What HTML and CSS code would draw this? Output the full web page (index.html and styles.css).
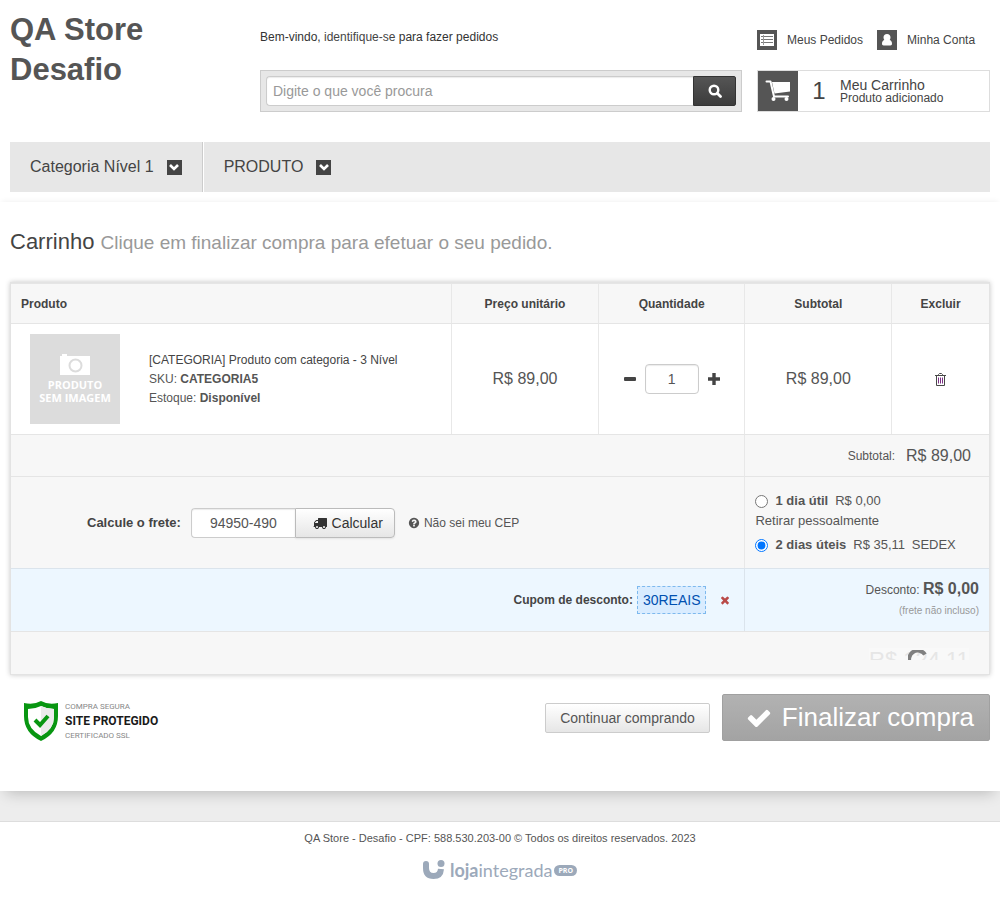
FILE: index.html
```html
<!DOCTYPE html>
<html lang="pt-BR">
<head>
<meta charset="utf-8">
<meta name="viewport" content="width=device-width, initial-scale=1">
<title>Carrinho - QA Store</title>
<link rel="stylesheet" href="styles.css">
</head>
<body>
<svg class="sprite" aria-hidden="true">
  <symbol id="chevron" viewBox="0 0 10 8"><path fill="none" stroke="currentColor" stroke-width="2.600" d="M1 2l4 4 4-4"/></symbol>
</svg>

<header class="header">
  <h1 class="logo"><a href="#">QA Store Desafio</a></h1>
  <div class="header-main">
    <p class="welcome">Bem-vindo, <a href="#">identifique-se</a> para fazer pedidos</p>
    <form class="search">
      <input class="search-input" type="text" placeholder="Digite o que você procura" aria-label="Buscar">
      <button class="search-button" type="button" aria-label="Buscar">
        <svg class="icon-14" viewBox="0 0 14 14"><circle cx="6" cy="6" r="4.300" fill="none" stroke="currentColor" stroke-width="2.400"/><path stroke="currentColor" stroke-width="2.800" stroke-linecap="round" d="M9.500 9.500l3 3"/></svg>
      </button>
    </form>
  </div>
  <div class="header-side">
    <div class="account">
      <a href="#" class="account-link">
        <span class="account-icon"><svg width="14" height="12" viewBox="0 0 14 12"><path d="M0 0h14v12H0z"/><path fill="#777" d="M1 2h12v1H1zM1 5h12v1H1zM1 8h12v1H1z"/><path fill="#999" d="M3 1h1v10H3z"/></svg></span>Meus Pedidos</a>
      <a href="#" class="account-link">
        <span class="account-icon"><svg width="12" height="12" viewBox="0 0 12 12"><path d="M6 0c2.200 0 3.500 1.500 3.500 3.500 0 1-.3 1.800-.8 2.500C10.400 6.500 11 8 11 9.800c0 1-.6 1.700-1.600 1.700H2.600C1.600 11.500 1 10.800 1 9.800 1 8 1.600 6.500 3.300 6c-.5-.7-.8-1.500-.8-2.500C2.500 1.500 3.800 0 6 0z"/></svg></span>Minha Conta</a>
    </div>
    <a href="#" class="cart">
      <span class="cart-icon"><svg width="26" height="22" viewBox="0 0 26 22"><path d="M7 2h18v9.500L9.500 13.500z"/><path fill="none" stroke="currentColor" stroke-width="2" stroke-linecap="round" stroke-linejoin="round" d="M1.500 1.500h4l3.500 15h14"/><circle cx="8.500" cy="19" r="2"/><circle cx="21.500" cy="19" r="2"/></svg></span>
      <span class="cart-count">1</span>
      <span class="cart-text"><span class="cart-title">Meu Carrinho</span><span class="cart-note">Produto adicionado</span></span>
    </a>
  </div>
</header>

<nav class="nav">
  <a href="#" class="nav-item">Categoria Nível 1<span class="nav-arrow"><svg width="10" height="8"><use href="#chevron"/></svg></span></a>
  <a href="#" class="nav-item">PRODUTO<span class="nav-arrow"><svg width="10" height="8"><use href="#chevron"/></svg></span></a>
</nav>

<main class="content">
  <h2 class="title">Carrinho <small>Clique em finalizar compra para efetuar o seu pedido.</small></h2>

  <table class="table">
    <thead>
      <tr>
        <th class="col-product" scope="col">Produto</th>
        <th class="col-value" scope="col">Preço unitário</th>
        <th class="col-value" scope="col">Quantidade</th>
        <th class="col-value" scope="col">Subtotal</th>
        <th class="col-remove" scope="col">Excluir</th>
      </tr>
    </thead>
    <tbody>
      <tr class="row-item">
        <td>
          <div class="product">
            <div class="thumb">
              <svg width="30" height="21" viewBox="0 0 30 21"><path fill="#fff" d="M2 0h5v2h23v19H0V2h2z"/><circle cx="15.500" cy="11.500" r="6" fill="none" stroke="#dcdcdc" stroke-width="2"/></svg>
              <span>PRODUTO</span><span>SEM IMAGEM</span>
            </div>
            <div class="product-info">
              <a href="#">[CATEGORIA] Produto com categoria - 3 Nível</a>
              <span>SKU: <b>CATEGORIA5</b></span>
              <span>Estoque: <b>Disponível</b></span>
            </div>
          </div>
        </td>
        <td class="price">R$ 89,00</td>
        <td>
          <div class="quantity">
            <button type="button" class="plain" aria-label="Diminuir"><svg width="12" height="12" viewBox="0 0 12 12"><rect x="0" y="4" width="12" height="4" rx="1"/></svg></button>
            <input class="field quantity-input" type="text" value="1" aria-label="Quantidade">
            <button type="button" class="plain" aria-label="Aumentar"><svg width="12" height="12" viewBox="0 0 12 12"><path d="M4.300 0h3.400v4.300H12v3.400H7.700V12H4.300V7.700H0V4.300h4.300z"/></svg></button>
          </div>
        </td>
        <td class="price">R$ 89,00</td>
        <td class="remove">
          <a href="#" aria-label="Excluir"><svg width="11" height="13" viewBox="0 0 11 13"><path fill="none" stroke="#484848" d="M3.500 2.500v-1l1-1h2l1 1v1M0 2.500h11M1.500 2.500v10h8v-10"/><path fill="none" stroke="#7c3085" d="M3.500 4.500v6M5.500 4.500v6M7.500 4.500v6"/></svg></a>
        </td>
      </tr>
      <tr class="row-subtotal">
        <td colspan="3"></td>
        <td colspan="2"><div class="subtotal">Subtotal: <strong>R$ 89,00</strong></div></td>
      </tr>
      <tr class="row-shipping">
        <td colspan="3">
          <div class="shipping">
            <label class="shipping-label" for="cep">Calcule o frete:</label>
            <div class="shipping-group">
              <input class="field cep" id="cep" type="text" value="94950-490">
              <button class="calc" type="button"><svg class="icon-14" viewBox="0 0 1792 1792"><path d="M640 1408q0-52-38-90t-90-38-90 38-38 90 38 90 90 38 90-38 38-90zm-384-512h384v-256h-158q-13 0-22 9l-195 195q-9 9-9 22v30zm1280 512q0-52-38-90t-90-38-90 38-38 90 38 90 90 38 90-38 38-90zm256-1088v1024q0 15-4 26.500t-13.500 18.500-16.500 11.500-23.500 6-22.500 2-25.500 0-22.500-.5q0 106-75 181t-181 75-181-75-75-181h-384q0 106-75 181t-181 75-181-75-75-181h-64q-3 0-22.500.5t-25.500 0-22.500-2-23.500-6-16.500-11.500-13.500-18.500-4-26.500q0-26 19-45t45-19v-320q0-8-.5-35t0-38 2.500-34.500 6.500-37 14-30.500 22.500-30l198-198q19-19 50.500-32t58.500-13h160v-192q0-26 19-45t45-19h1024q26 0 45 19t19 45z"/></svg>Calcular</button>
            </div>
            <a class="help" href="#"><svg width="12" height="12" viewBox="0 0 1792 1792"><path d="M1024 1376v-192q0-14-9-23t-23-9h-192q-14 0-23 9t-9 23v192q0 14 9 23t23 9h192q14 0 23-9t9-23zm256-672q0-88-55.500-163t-138.500-116-170-41q-243 0-371 213-15 24 8 42l132 100q7 6 19 6 16 0 25-12 53-68 86-92 34-24 86-24 48 0 85.500 26t37.500 59q0 38-20 61t-68 45q-63 28-115.500 86.500t-52.500 125.500v36q0 14 9 23t23 9h192q14 0 23-9t9-23q0-19 21.500-49.500t54.500-49.500q32-18 49-28.500t46-35 44.500-48 28-60.500 12.500-81zm384 192q0 209-103 385.500t-279.500 279.500-385.500 103-385.500-103-279.500-279.500-103-385.500 103-385.500 279.500-279.500 385.500-103 385.500 103 279.500 279.500 103 385.500z"/></svg>Não sei meu CEP</a>
          </div>
        </td>
        <td colspan="2">
          <ul class="options">
            <li><label><input type="radio" name="frete"><b>1 dia útil</b><span class="cost">R$ 0,00</span> Retirar pessoalmente</label></li>
            <li><label><input type="radio" name="frete" checked><b>2 dias úteis</b><span class="cost">R$ 35,11</span> SEDEX</label></li>
          </ul>
        </td>
      </tr>
      <tr class="row-coupon">
        <td colspan="3">
          <div class="coupon">
            <b>Cupom de desconto:</b><span class="coupon-code">30REAIS</span>
            <button class="plain coupon-remove" type="button" aria-label="Remover cupom"><svg width="12" height="12" viewBox="0 0 1792 1792"><path d="M1490 1322q0 40-28 68l-136 136q-28 28-68 28t-68-28l-294-294-294 294q-28 28-68 28t-68-28l-136-136q-28-28-28-68t28-68l294-294-294-294q-28-28-28-68t28-68l136-136q28-28 68-28t68 28l294 294 294-294q28-28 68-28t68 28l136 136q28 28 28 68t-28 68l-294 294 294 294q28 28 28 68z"/></svg></button>
          </div>
        </td>
        <td colspan="2" class="discount">
          <div>Desconto: <strong>R$ 0,00</strong></div>
          <small>(frete não incluso)</small>
        </td>
      </tr>
      <tr class="row-total">
        <td colspan="5">
          <div class="total"><span>R$ 124,11</span><svg class="spinner" width="20" height="20" viewBox="0 0 20 20"><path fill="none" stroke="#808080" stroke-width="4" d="M2.500 14A8 8 0 0 1 17 4.500"/></svg></div>
        </td>
      </tr>
    </tbody>
  </table>

  <div class="actions">
    <div class="seal">
      <svg width="34" height="40" viewBox="0 0 34 40"><path fill="#089611" d="M17 0q7 4 17 2v13q0 17-17 25Q0 32 0 15V2q10 2 17-2z"/><path fill="#fff" d="M17 5q6 3 13 3v8q0 12-13 19Q4 28 4 16V8q7 0 13-3z"/><path fill="#ebebeb" d="M17 5q6 3 13 3v8q0 12-13 19z"/><path fill="none" stroke="#089611" stroke-width="4" d="M11 19l5 5 8-9"/></svg>
      <div class="seal-text"><span>COMPRA SEGURA</span><strong>SITE PROTEGIDO</strong><span>CERTIFICADO SSL</span></div>
    </div>
    <button class="btn-continue" type="button">Continuar comprando</button>
    <button class="btn-finish" type="button"><svg width="26" height="26" viewBox="0 0 1792 1792"><path d="M1671 566q0 40-28 68l-724 724-136 136q-28 28-68 28t-68-28l-136-136-362-362q-28-28-28-68t28-68l136-136q28-28 68-28t68 28l294 295 656-657q28-28 68-28t68 28l136 136q28 28 28 68z"/></svg>Finalizar compra</button>
  </div>
</main>

<footer class="footer">
  <p>QA Store - Desafio - CPF: 588.530.203-00 © Todos os direitos reservados. 2023</p>
  <a class="brand" href="#" aria-label="Loja Integrada PRO">
    <svg width="22" height="20" viewBox="0 0 22 20"><path fill="none" stroke="#9ca9ba" stroke-width="6" d="M3 4v4q0 8 7.500 8 7 0 7.500-7"/><circle cx="3" cy="4" r="3"/><circle cx="18" cy="3.500" r="3.500"/></svg>
    <span class="brand-name"><b>loja</b>integrada</span><span class="brand-tag">PRO</span>
  </a>
</footer>
</body>
</html>
```

FILE: styles.css
```css
* { box-sizing: border-box; }
body {
  margin: 0;
  background: #fff;
  color: #555;
  font: 12px/20px "Liberation Sans", Arial, sans-serif;
}
a { color: #444; text-decoration: none; }
h1, h2, p, ul { margin: 0; padding: 0; }
ul { list-style: none; }
svg { display: block; fill: currentColor; flex: none; }
button, input { font-family: inherit; }
.sprite { display: none; }
.icon-14 { width: 14px; height: 14px; }

/* Header */
.header {
  display: grid;
  grid-template-columns: 250px 1fr 248px;
  padding: 10px 10px 0;
  min-height: 142px;
}
.logo { font-size: 31px; line-height: 40px; padding-right: 60px; }
.logo a { color: #555; }
.welcome { padding: 17px 0 23px; color: #333; }
.search {
  display: flex;
  height: 42px;
  padding: 5px;
  border: 1px solid #ccc;
  background: #e7e7e7;
}
.search-input {
  flex: 1;
  min-width: 0;
  padding: 0 6px;
  border: 1px solid #ccc;
  border-right: 0;
  border-radius: 4px 0 0 4px;
  box-shadow: inset 0 1px 1px rgba(0, 0, 0, .08);
  font-size: 14px;
}
.search-input::placeholder { color: #999; opacity: 1; }
.search-button {
  display: grid;
  place-items: center;
  width: 43px;
  padding: 0;
  border: 1px solid #333;
  border-radius: 0 2px 2px 0;
  background: linear-gradient(#555, #3c3c3c);
  color: #fff;
}
.header-side { padding-left: 15px; }
.account { display: flex; gap: 14px; padding: 20px 0; }
.account-link { display: flex; gap: 10px; white-space: nowrap; }
.account-icon {
  display: grid;
  place-items: center;
  width: 20px;
  height: 20px;
  background: #555;
  color: #fff;
}
.cart { display: flex; height: 42px; border: 1px solid #ddd; }
.cart-icon {
  display: grid;
  place-items: center;
  width: 40px;
  background: #555;
  color: #fff;
}
.cart-count { width: 42px; font-size: 24px; line-height: 40px; text-align: center; }
.cart-text { display: flex; flex-direction: column; padding-top: 7px; line-height: 12px; }
.cart-title { font-size: 14px; line-height: 14px; }

/* Category menu */
.nav { display: flex; margin: 0 10px 10px; background: #e7e7e7; }
.nav-item {
  display: flex;
  align-items: center;
  gap: 13px;
  height: 50px;
  padding: 0 20px;
  border-left: 1px solid #fff;
  border-right: 1px solid #ccc;
  font-size: 16px;
}
.nav-item:first-child { border-left: 0; }
.nav-item:last-child { border-right: 0; }
.nav-arrow {
  display: grid;
  place-items: center;
  width: 15px;
  height: 15px;
  background: #444;
  color: #fff;
}

/* Content */
.content {
  position: relative;
  padding: 20px 10px 50px;
  background: #fff;
  box-shadow: 0 8px 14px -6px rgba(0, 0, 0, .22), 0 -2px 6px -2px rgba(0, 0, 0, .07);
}
.title { padding-bottom: 19px; font-size: 22px; font-weight: 400; line-height: 40px; color: #444; }
.title small { font-size: 19px; color: #999; }

.table {
  width: 100%;
  table-layout: fixed;
  border: 1px solid #e3e3e3;
  border-spacing: 0;
  border-collapse: separate;
  background: #f7f7f7;
  box-shadow: 0 0 5px rgba(0, 0, 0, .22);
}
.table th, .table td {
  padding: 0;
  border-top: 1px solid #e5e5e5;
  border-left: 1px solid #e8e8e8;
}
.table th:first-child, .table td:first-child { border-left: 0; }
.table th { height: 40px; color: #444; text-align: center; }
.table .col-product { width: 45%; padding-left: 10px; text-align: left; }
.col-value { width: 15%; }
.col-remove { width: 10%; }
.row-item { height: 111px; background: #fff; }
.product { display: flex; align-items: center; gap: 29px; padding-left: 19px; }
.thumb {
  display: flex;
  flex-direction: column;
  align-items: center;
  width: 90px;
  height: 90px;
  padding-top: 20px;
  background: #dcdcdc;
  color: #fff;
  font: bold 11px/13px "Open Sans", sans-serif;
}
.thumb svg { margin-bottom: 3px; }
.product-info { display: flex; flex-direction: column; line-height: 19px; }
.price { font-size: 16px; text-align: center; }
.plain { padding: 0; border: 0; background: none; color: #444; }
.quantity { display: flex; align-items: center; justify-content: center; gap: 9px; }
.field {
  height: 30px;
  border: 1px solid #ccc;
  border-radius: 4px;
  background: #fff;
  box-shadow: inset 0 1px 1px rgba(0, 0, 0, .08);
  color: #555;
  font-size: 14px;
  text-align: center;
}
.quantity-input { width: 54px; }
.remove a { display: grid; justify-content: center; }
.row-subtotal { height: 42px; }
.subtotal {
  display: flex;
  align-items: center;
  justify-content: flex-end;
  gap: 11px;
  padding-right: 18px;
}
.subtotal strong { font-size: 16px; font-weight: 400; }
.row-shipping { height: 92px; }
.shipping { display: flex; align-items: center; padding-left: 76px; }
.shipping-label { margin-right: 10px; font-size: 13px; font-weight: 700; color: #444; }
.shipping-group { display: flex; margin-right: 13px; }
.cep { width: 104px; border-right: 0; border-radius: 4px 0 0 4px; }
.calc {
  display: flex;
  align-items: center;
  justify-content: flex-end;
  gap: 5px;
  width: 100px;
  padding: 0 11px 0 0;
  border: 1px solid #bbb;
  border-radius: 0 4px 4px 0;
  background: linear-gradient(#fff, #e6e6e6);
  box-shadow: 0 1px 2px rgba(0, 0, 0, .08);
  color: #333;
  font-size: 14px;
}
.help { display: flex; align-items: center; gap: 4px; color: #555; }
.options { padding-left: 10px; font-size: 13px; }
.options li + li { padding-top: 4px; }
.options label { display: block; max-width: 210px; }
.options li:first-child label { max-width: 170px; }
.options input { width: 13px; height: 13px; margin: 0 7px 0 0; vertical-align: -3px; }
.cost { margin: 0 3px 0 7px; }

.table .row-coupon td { height: 63px; border-top-color: #dbe4ec; border-left-color: #dbe4ec; background: #edf7ff; }
.coupon { display: flex; align-items: center; justify-content: flex-end; gap: 4px; padding-right: 13px; color: #444; }
.coupon-code {
  padding: 3px 5px;
  border: 1px dashed #7db9ee;
  background: #d9ecff;
  color: #0050b0;
  font-size: 14px;
}
.coupon-remove { margin-left: 9px; color: #b94a48; }
.table .discount { padding-right: 10px; text-align: right; }
.discount strong { font-size: 16px; }
.discount small { font-size: 10px; color: #999; }
.row-total { height: 43px; }
.table .row-total td { padding: 16px 20px 14px; }
.total {
  position: relative;
  width: 100px;
  height: 12px;
  margin-left: auto;
  overflow: hidden;
  background: #f9f9f9;
  color: #e6e6e6;
  font-size: 22px;
  line-height: 24px;
}
.spinner { position: absolute; top: 2px; left: 39px; }

/* Actions below the table */
.actions { display: flex; align-items: center; gap: 12px; padding-top: 19px; }
.seal { display: flex; gap: 7px; margin-right: auto; padding: 6px 0 0 14px; }
.seal-text { display: flex; flex-direction: column; color: #888; font: 8px/11px Roboto, sans-serif; }
.seal-text strong { color: #1a1a1a; font-size: 12px; line-height: 18px; }
.btn-continue {
  height: 30px;
  padding: 0 14px;
  border: 1px solid #ccc;
  border-radius: 2px;
  background: linear-gradient(#fff, #e6e6e6);
  color: #555;
  font-size: 14px;
}
.btn-finish {
  display: flex;
  align-items: center;
  gap: 10px;
  height: 47px;
  padding: 0 15px 0 23px;
  border: 1px solid #a0a0a0;
  border-radius: 2px;
  background: linear-gradient(#b2b2b2, #a3a3a3);
  color: #fff;
  font-size: 26px;
}

/* Footer */
.footer {
  display: flex;
  flex-direction: column;
  align-items: center;
  border-top: 30px solid #ededed;
  font-size: 11px;
}
.footer p { width: 100%; padding-top: 6px; border-top: 1px solid #ddd; text-align: center; }
.brand { display: flex; align-items: center; padding-top: 12px; color: #9ca9ba; }
.brand-name { margin-left: 5px; font: 18px/20px Lato, sans-serif; }
.brand-tag {
  margin-left: 2px;
  padding: 0 4px;
  border-radius: 6px;
  background: #9ca9ba;
  color: #fff;
  font: bold 7px/11px "Open Sans", sans-serif;
}
```
